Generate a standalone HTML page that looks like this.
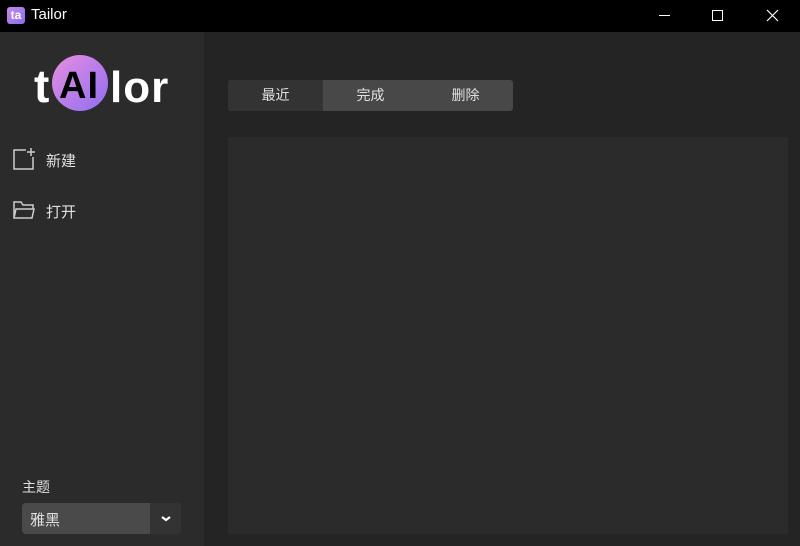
<!DOCTYPE html>
<html><head><meta charset="utf-8"><style>
*{margin:0;padding:0;box-sizing:border-box}
body{width:800px;height:546px;background:#242424;font-family:"Liberation Sans","Noto Sans CJK SC",sans-serif;color:#e0e0e0;position:relative;overflow:hidden}
.title{position:absolute;left:0;top:0;width:800px;height:32px;background:#000}
.side{position:absolute;left:0;top:32px;width:204px;height:514px;background:#2b2b2b}
.abs{position:absolute}
.lg{position:absolute;font-weight:bold;line-height:1;color:#fff}
</style></head><body>
<div class="title">
 <div class="abs" style="left:7px;top:7px;width:18px;height:17px;border-radius:3px;background:linear-gradient(135deg,#c58ae8,#8a6cf0);color:#fff;font-weight:bold;font-size:12px;line-height:17px;text-align:center">ta</div>
 <div class="abs" style="left:31px;top:6px;font-size:15px;color:#fff">Tailor</div>
 <div class="abs" style="left:659px;top:15px;width:11px;height:1px;background:#fff"></div>
 <div class="abs" style="left:712px;top:10px;width:11px;height:11px;border:1px solid #fff"></div>
 <svg class="abs" style="left:766px;top:9px" width="13" height="13"><path d="M1 1L12 12M12 1L1 12" stroke="#fff" stroke-width="1.2"/></svg>
</div>
<div class="side">
 <div class="abs" style="left:52px;top:23px;width:56px;height:56px;border-radius:50%;background:linear-gradient(135deg,#e88ee0,#8f6ef2)"></div>
 <div class="lg" style="left:34px;top:31px;font-size:46px">t</div>
 <div class="lg" style="left:59px;top:35px;font-size:38px;color:#000;letter-spacing:1px">AI</div>
 <div class="lg" style="left:110px;top:34px;font-size:44px;letter-spacing:1px">lor</div>
 <svg class="abs" style="left:12px;top:115px" width="24" height="24" fill="none" stroke="#ccc" stroke-width="1.5"><path d="M14 3H2v19h19V10"/><path d="M19 1v8M15 5h8"/></svg>
 <div class="abs" style="left:46px;top:118px;font-size:15px">新建</div>
 <svg class="abs" style="left:12px;top:167px" width="24" height="22" fill="none" stroke="#ccc" stroke-width="1.5"><path d="M2 19V3h7l2 3h10v4M2 19l2-9h18l-2 9z"/></svg>
 <div class="abs" style="left:46px;top:169px;font-size:15px">打开</div>
 <div class="abs" style="left:22px;top:445px;font-size:14px">主题</div>
 <div class="abs" style="left:22px;top:471px;width:159px;height:31px;border-radius:4px;background:#4a4a4a"></div>
 <div class="abs" style="left:150px;top:471px;width:31px;height:31px;border-radius:0 4px 4px 0;background:#333"></div>
 <svg class="abs" style="left:160px;top:483px" width="12" height="8"><path d="M2 2l4 3 4-3" stroke="#fff" stroke-width="2.2" fill="none"/></svg>
 <div class="abs" style="left:30px;top:477px;font-size:15px">雅黑</div>
</div>
<div class="abs" style="left:228px;top:80px;width:285px;height:31px;border-radius:3px;background:#484848"></div>
<div class="abs" style="left:228px;top:80px;width:95px;height:31px;border-radius:3px 0 0 3px;background:#333"></div>
<div class="abs" style="left:228px;top:85px;width:95px;text-align:center;font-size:14px">最近</div>
<div class="abs" style="left:323px;top:85px;width:95px;text-align:center;font-size:14px">完成</div>
<div class="abs" style="left:418px;top:85px;width:95px;text-align:center;font-size:14px">删除</div>
<div class="abs" style="left:228px;top:137px;width:560px;height:397px;background:#2b2b2b;border-radius:2px"></div>
</body></html>
